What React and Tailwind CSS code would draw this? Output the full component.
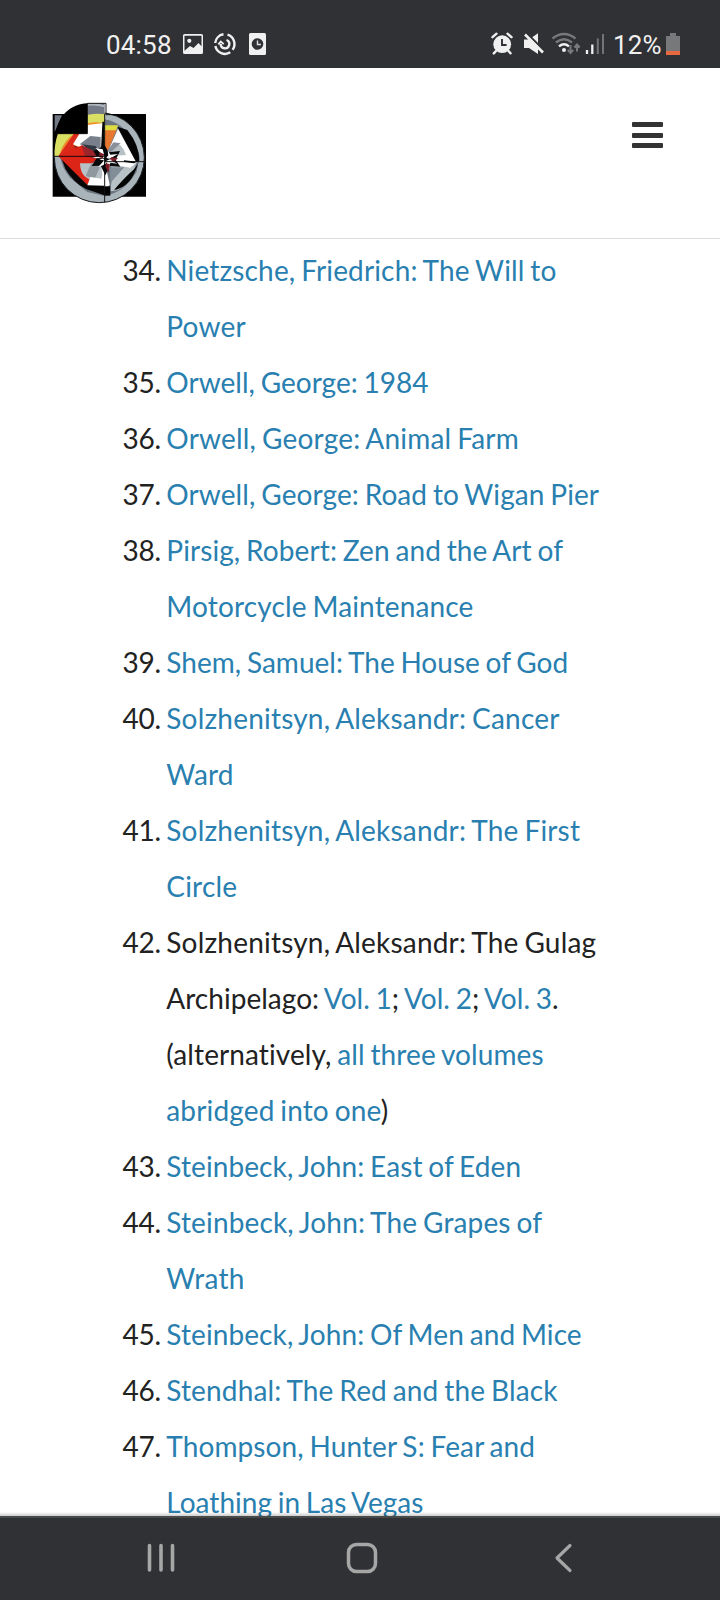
import React from "react";

const tight = "tracking-[0.03px]";
const mid = "tracking-[0.1px]";
const base = "tracking-[0.15px]";
const wide = "tracking-[0.2px]";

const books = [
  { n: 34, lines: [[base, ["Nietzsche, Friedrich: The Will to", 1]], [wide, ["Power", 1]]] },
  { n: 35, lines: [[tight, ["Orwell, George: 1984", 1]]] },
  { n: 36, lines: [[wide, ["Orwell, George: Animal Farm", 1]]] },
  { n: 37, lines: [[mid, ["Orwell, George: Road to Wigan Pier", 1]]] },
  { n: 38, lines: [[mid, ["Pirsig, Robert: Zen and the Art of", 1]], [base, ["Motorcycle Maintenance", 1]]] },
  { n: 39, lines: [[tight, ["Shem, Samuel: The House of God", 1]]] },
  { n: 40, lines: [[wide, ["Solzhenitsyn, Aleksandr: Cancer", 1]], [wide, ["Ward", 1]]] },
  { n: 41, lines: [[wide, ["Solzhenitsyn, Aleksandr: The First", 1]], [wide, ["Circle", 1]]] },
  {
    n: 42,
    lines: [
      [wide, ["Solzhenitsyn, Aleksandr: The Gulag", 0]],
      [tight, ["Archipelago: ", 0], ["Vol. 1", 1], ["; ", 0], ["Vol. 2", 1], ["; ", 0], ["Vol. 3", 1], [".", 0]],
      [mid, ["(alternatively, ", 0], ["all three volumes", 1]],
      [base, ["abridged into one", 1], [")", 0]],
    ],
  },
  { n: 43, lines: [[mid, ["Steinbeck, John: East of Eden", 1]]] },
  { n: 44, lines: [[base, ["Steinbeck, John: The Grapes of", 1]], [wide, ["Wrath", 1]]] },
  { n: 45, lines: [[mid, ["Steinbeck, John: Of Men and Mice", 1]]] },
  { n: 46, lines: [[base, ["Stendhal: The Red and the Black", 1]]] },
  { n: 47, lines: [[mid, ["Thompson, Hunter S: Fear and", 1]], [tight, ["Loathing in Las Vegas", 1]]] },
];

function NotificationIcons() {
  return (
    <svg className="ml-[8px] mt-[30px] h-[28px] w-[90px]" viewBox="0 0 90 28">
      <path fill="#f0f0f0" fillRule="evenodd" d="M4.500 4h17q1.500 0 1.500 1.500v17q0 1.500-1.500 1.500h-17q-1.500 0-1.500-1.500v-17q0-1.500 1.500-1.500zM4.500 5.800v15l5.500-4.800 3.500 2 5-5 3 3.200v-10.400z" />
      <circle cx="9.300" cy="10.800" r="2.100" fill="#f0f0f0" />
      <g fill="none" stroke="#f0f0f0" strokeWidth="2.400">
        <path d="M43.500 4.300A9.800 9.800 0 0 0 35.200 13" />
        <path d="M35.400 16A9.800 9.800 0 0 0 50.300 22.300" />
        <path d="M47.500 4.600A9.800 9.800 0 0 1 52.600 19.700" />
        <path d="M40.700 14A4.300 4.300 0 1 0 46.500 10" />
        <path d="M38.300 14.300l2.500-2.800 2.900 2.600" strokeWidth="1.900" />
      </g>
      <rect x="69" y="3" width="17" height="22" rx="1.500" fill="#f0f0f0" />
      <circle cx="77.500" cy="14" r="5.800" fill="#303135" />
      <path d="M77.500 10.500v4h3.500" fill="none" stroke="#ddd" strokeWidth="1.400" />
    </svg>
  );
}

function SystemIcons() {
  return (
    <svg className="h-[28px] w-[120px]" viewBox="0 0 120 28">
      <g stroke="#f0f0f0" strokeLinecap="round" fill="none">
        <path d="M2.500 7.200l4-3.500M17.500 3.700l4 3.500" strokeWidth="2.400" />
        <path d="M6 21l-2.200 2.300M18.500 21l2 2.300" strokeWidth="2.500" />
      </g>
      <circle cx="12.200" cy="14.200" r="8.900" fill="#f0f0f0" />
      <path d="M12 9v6h4.600" fill="none" stroke="#303135" strokeWidth="1.900" />
      <path d="M34 9.500h5l9-6.300v20.800l-9-6h-5z" fill="#f0f0f0" />
      <path d="M36.800 3.200l17 17" stroke="#303135" strokeWidth="2.200" />
      <path d="M35 4.500l18 18" stroke="#f0f0f0" strokeWidth="2.600" />
      <g fill="none" strokeWidth="2.400" stroke="#77787b">
        <path d="M62.500 8.500q11.500-9 23 0" />
        <path d="M66 12.500q8-6.500 16 0" />
        <path d="M69 16.300q5-4.300 10 0" stroke="#f0f0f0" />
      </g>
      <circle cx="74" cy="20" r="2" fill="#f0f0f0" />
      <path d="M80.500 15v8M77.800 20l2.700 3 2.700-3M87 21.500v-7M84.300 17.500l2.700-3 2.700 3" fill="none" stroke="#77787b" strokeWidth="2" />
      <path d="M97 20v4M102.300 14.500v9.500" stroke="#f0f0f0" strokeWidth="2.300" />
      <path d="M107.800 8.500v15.500M113 4v20" stroke="#737477" strokeWidth="2" />
    </svg>
  );
}

function Logo() {
  return (
    <svg className="h-[120px] w-[120px]" viewBox="0 0 360 360">
      <path d="M38 72h280v248H38z" fill="#020203" />
      <circle cx="178" cy="203" r="135" fill="#a9b3ba" stroke="#15181b" strokeWidth="3" />
      <path d="M194 88Q268 100 299 200l-9 45Q250 310 194 317z" fill="#6c7580" />
      <path d="M232 110L262 120Q298 165 298 212L288 216z" fill="#050506" />
      <path d="M60 199Q66 235 90 263L142 306 194 318V199z" fill="#6c7580" />
      <path d="M76 236Q100 278 138 297L193 316V199H62z" fill="#060607" />
      <path d="M44 76h22l-22 50z" fill="#727985" />
      <path d="M194 67V199H44Q42 165 54 130L142 128V67z" fill="#d9df63" />
      <path d="M60 188q12-36 42-57h16l-18 34z" fill="#ee8a2c" />
      <path d="M55 198L102 131h22l-24 34 93 33z" fill="#dc2a1b" />
      <path d="M142 40h52v34h-52z" fill="#737986" />
      <path d="M142 40q28-2 52 6v6q-25-8-52-5z" fill="#afb7bd" />
      <path d="M142 76q27-7 51-3v27q-27-7-51 0z" fill="#d9df63" />
      <path d="M142 100q26-6 45-1l-2 11-43-2z" fill="#ef912e" />
      <path d="M187 95h6v100h-15z" fill="#09090b" />
      <path d="M99 163l22-36h21v-22l45-5-5 96z" fill="#fff" />
      <path d="M119 163l32-25 31 3v47l-20-12z" fill="#78808b" />
      <path d="M126 163l41 5 15 24-24-1z" fill="#323943" />
      <path d="M46 131C56 76 92 42 142 40v91z" fill="#000" />
      <path d="M195 106h39l-6 17h-33z" fill="#dfdc42" />
      <path d="M195 121h34l-25 61h-9z" fill="#e77830" />
      <path d="M234 116L288 216 200 206 207 177z" fill="#fff" />
      <path d="M218 159q27-4 40 36l-55 4z" fill="#b6bfc4" />
      <path d="M221 157l21 3-43 39-1-12z" fill="#88919a" />
      <path d="M55 199h138l-51 86z" fill="#dc2417" />
      <path d="M100 166l93 32-45 38-28-32z" fill="#9b252a" />
      <path d="M55 199L126 166l50 33-53 54z" fill="#dc2417" />
      <path d="M124 165l69 33-30 8-28-8z" fill="#9b252a" />
      <path d="M120 220h35l38-14v70q-27-8-40-7-32-8-33-49z" fill="#b7c0c5" />
      <path d="M152 223l40-20-28 64-27-9z" fill="#8e989e" />
      <path d="M142 286l9-25 33 5 9-38v59z" fill="#fff" />
      <path d="M184 232l8-25 17 76-4 7h-12z" fill="#fff" />
      <path d="M211 294L222 240 200 214 290 216 282 240Q268 282 233 301l-22 3z" fill="#b8c1c6" />
      <path d="M211 232h42l-42 47z" fill="#828e97" />
      <path d="M222 300q51-8 72-79-10 17-25 29-21 20-47 50z" fill="#020303" />
      <path d="M194 289h17v28h-17z" fill="#020303" />
      <path d="M202 205L291 216 271 233 210 222z" fill="#fff" />
      <path d="M252 211l39 4-9 5-30-4z" fill="#08090a" />
      <path d="M160 184l34-18 12 21 34-4-13 26 14 21-31-2-14 28-14-29-27 1 17-26z" fill="#08090b" />
      <path d="M166 174l22 4 6 22zM157 204l29-8 10 9zM174 232l22-25-5 18zM203 181l8 13 23-2-28 16zM207 208l25 13-21-3-4 24-7-25z" fill="#fff" />
      <path d="M178 187l15 6-4 12-12-3zM214 202l20 3-10 8-17-3zM198 220l12 3-4 25-10-18z" fill="#7f1d27" />
      <path d="M188 196l10 7 8-8 1 12 11 4-15 2-7 10-5-12-13-2 12-4z" fill="#fff" />
      <path d="M195 198l7 7 9 2-11 5-6 8-1-12-7-4 8-1z" fill="#0c0d0f" />
      <path d="M44 199h149M194 72v265M194 215h118M142 40v91H44M142 40h56v34h120" fill="none" stroke="#070809" strokeWidth="2.800" />
    </svg>
  );
}

export default function App() {
  return (
    <div className="flex h-[1600px] w-[720px] flex-col overflow-hidden bg-white font-['Lato',sans-serif]">
      <div className="flex h-[68px] shrink-0 bg-[#303135] pl-[106px] font-['Roboto',sans-serif] text-[#f0f0f0]">
        <span className="mt-[29px] w-[66px] text-[26px] leading-[32px] tracking-[0.2px] whitespace-nowrap">04:58</span>
        <NotificationIcons />
        <div className="mt-[30px] ml-[220px]"><SystemIcons /></div>
        <span className="mt-[29px] ml-[3px] w-[50px] text-[26px] leading-[32px] tracking-[0.2px] whitespace-nowrap">12%</span>
        <svg className="mt-[33px] ml-[3px] h-[22px] w-[14px] shrink-0" viewBox="0 0 14 22">
          <path d="M4 0h6v3h4v19H0V3h4z" fill="#77787a" />
          <path d="M0 18h14v4H0z" fill="#e8693f" />
        </svg>
      </div>
      <header className="flex h-[171px] shrink-0 justify-between border-b border-[#dcdcdc] pt-[22px] pr-[57px] pl-[40px]">
        <Logo />
        <button aria-label="Menu" className="mt-[32px] flex h-[26px] w-[31px] flex-col justify-between">
          <span className="h-[5px] w-full rounded-[1px] bg-[#333]" />
          <span className="h-[5px] w-full rounded-[1px] bg-[#333]" />
          <span className="h-[5px] w-full rounded-[1px] bg-[#333]" />
        </button>
      </header>
      <main className="min-h-0 flex-1 overflow-hidden pt-[3px] text-[28px] leading-[56px] text-[#222]">
        <ol>
          {books.map((b) => (
            <li key={b.n} className="flex whitespace-pre">
              <span className="w-[161px] shrink-0 text-right tracking-[-0.2px]">{b.n}.</span>
              <div className="ml-[5.300px] [word-spacing:-1.500px]">
                {b.lines.map(([tracking, ...parts], i) => (
                  <div key={i} className={tracking}>
                    {parts.map(([text, link], j) =>
                      link ? <a key={j} className="text-[#2980b0]">{text}</a> : <span key={j}>{text}</span>
                    )}
                  </div>
                ))}
              </div>
            </li>
          ))}
        </ol>
      </main>
      <div className="relative z-10 -mt-[4px] h-[4px] shrink-0 bg-linear-to-b from-black/0 to-black/20" />
      <nav className="flex h-[84px] shrink-0 border-t-2 border-[#484a4a] bg-[#303135]">
        <svg className="h-[82px] w-[720px]" viewBox="0 0 720 82" fill="none" stroke="#a6a6a6" strokeLinecap="round">
          <path d="M149.500 27.500v24.500M161 27.500v24.500M172.500 27.500v24.500" strokeWidth="3.600" />
          <rect x="348.500" y="26.500" width="27" height="27" rx="8" strokeWidth="3.500" />
          <path d="M570 27.500L557 40l13 12.500" strokeWidth="3.200" strokeLinejoin="round" />
        </svg>
      </nav>
    </div>
  );
}
